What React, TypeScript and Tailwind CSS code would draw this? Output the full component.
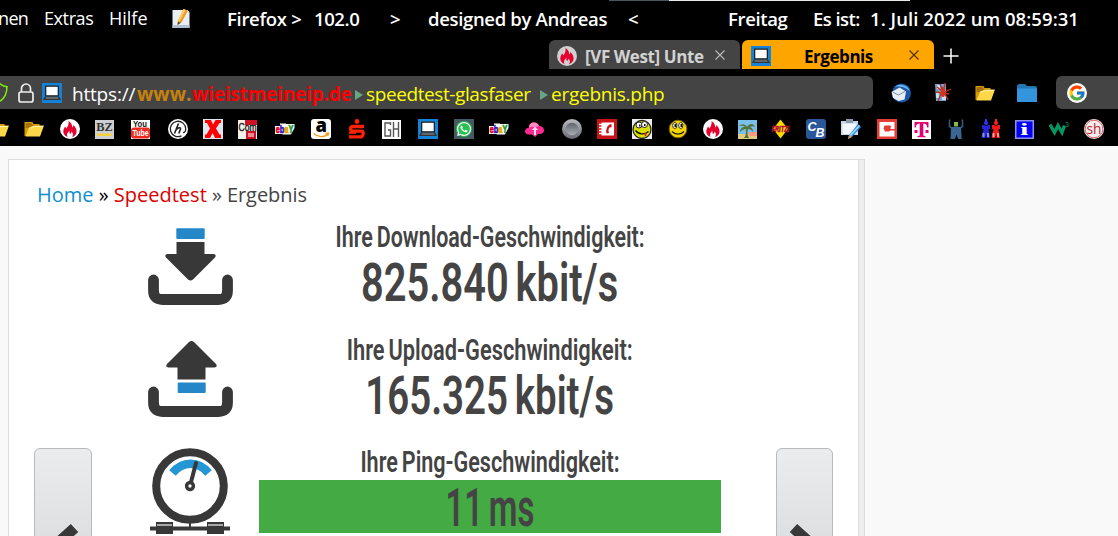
import type { ReactNode } from 'react'
import { FcGoogle } from 'react-icons/fc'
import { FaWhatsapp } from 'react-icons/fa'

function Icon({ children, className = 'h-5 w-5' }: { children: ReactNode; className?: string }) {
  return (
    <svg viewBox="0 0 20 20" className={`block shrink-0 ${className}`} aria-hidden="true">
      {children}
    </svg>
  )
}

function Folder() {
  return (
    <Icon>
      <path d="M.5 3h8l1 2h6v12H.5z" fill="#d49a08" />
      <path d="M1.500 4h6l1 2h6v3h-13z" fill="#a87200" />
      <path d="M5 8.500L10 6.500h10L16 17.500H1.500z" fill="#ffd84a" />
      <path d="M5.500 9.500l5-2h8" stroke="#fff3b0" fill="none" />
    </Icon>
  )
}

function Flame({ bg = '#fff' }: { bg?: string }) {
  return (
    <Icon>
      <circle cx="10" cy="10" r="10" fill={bg} />
      <path
        d="M8.500 2c3 2 4 4.500 3.500 6.500 1-.5 1.300-1.300 1.500-2.500 2 2 3.500 5 3 7.500-.5 2.500-2.500 4-4.500 4.500 1.500-2 1-4-.5-5.500 0 1.500-.8 2-1.500 2.500-.7-1-.7-2-.4-3.200C7 13.500 6.500 16 7.500 18 4.500 17 3 14.500 3.300 12c.2-2 1.200-3 1.700-4.500.8.5 1 1.200 1.200 2C8 7.500 9 5 8.500 2z"
        fill="#e6002e"
      />
    </Icon>
  )
}

function Laptop() {
  return (
    <Icon>
      <path d="M0 0h20v20H0z" fill="#1283d8" />
      <path d="M3 2.500h14v11H3z" fill="#222" />
      <path d="M4.300 3.800h11.400v8.400H4.300z" fill="#fff" />
      <path d="M3 13.500h14l2 3.500H1z" fill="#333" />
      <path d="M4 14.500h12l.5 1h-13z" fill="#999" />
    </Icon>
  )
}

function Ebay() {
  return (
    <Icon>
      <path d="M0 7h5V4.500h6V5h8.500v4L16 15.500H8L7 15H0z" fill="#fff" />
      <text x="0.800" y="13.500" fontFamily="Liberation Sans" fontWeight="700" fontSize="10.500" textLength="17.500" lengthAdjust="spacingAndGlyphs" strokeWidth=".7">
        <tspan fill="#e00012" stroke="#e00012">e</tspan>
        <tspan fill="#2714c8" stroke="#2714c8">b</tspan>
        <tspan fill="#e8a000" stroke="#e8a000">a</tspan>
        <tspan fill="#199b20" stroke="#199b20">Y</tspan>
      </text>
    </Icon>
  )
}

function Notepad() {
  return (
    <Icon>
      <path d="M1.500 1h15l2 2v16h-17z" fill="#e9eef2" />
      <path d="M1.500 16h17v3h-17z" fill="#aebfd0" />
      <path d="M12.500 0l4.500 1.500-6.500 12L6.500 16l.5-4.500z" fill="#f09a22" />
      <path d="M12.500 0l2 .7-6 12-1.500-1z" fill="#ffcf62" />
      <path d="M7 12.500L6.500 16l3-2z" fill="#444" />
    </Icon>
  )
}

const bookmarks: { x: number; icon: ReactNode }[] = [
  { x: -11, icon: <Folder /> },
  { x: 24, icon: <Folder /> },
  { x: 60, icon: <Flame /> },
  {
    x: 95,
    icon: (
      <Icon>
        <path d="M0 1h19v19H0z" fill="#cdcfd2" />
        <text x="1.200" y="12" fontFamily="Liberation Serif" fontWeight="700" fontSize="12.500" textLength="16.500" lengthAdjust="spacingAndGlyphs" fill="#333">BZ</text>
        <path d="M2 14.500h15v2.500H2z" fill="#f6d33c" />
      </Icon>
    ),
  },
  {
    x: 131,
    icon: (
      <Icon>
        <path d="M0 1h19v19H0z" fill="#fff" />
        <rect y="8.500" width="19" height="11" rx="3" fill="#ef2a1e" />
        <g fontFamily="Liberation Sans" fontWeight="700" fontSize="8.500">
          <text x="2" y="7.500" textLength="14" lengthAdjust="spacingAndGlyphs" fill="#111">You</text>
          <text x="1.500" y="17.300" textLength="16" lengthAdjust="spacingAndGlyphs" fill="#fff">Tube</text>
        </g>
      </Icon>
    ),
  },
  {
    x: 168,
    icon: (
      <Icon>
        <circle cx="10" cy="10" r="10" fill="#fff" />
        <path d="M13.500 16.800A7.700 7.700 0 1 1 17.700 10c0 2-1 3.500-2.600 3.500" fill="none" stroke="#222" strokeWidth="1.300" />
        <path d="M10.500 4.500L6.500 14.500M8 11c1.500-2 5-3.500 4.500-1l-1.700 4.500" fill="none" stroke="#222" strokeWidth="1.600" />
      </Icon>
    ),
  },
  {
    x: 203,
    icon: (
      <Icon>
        <path d="M0 0h20v20H0z" fill="#dfe5ee" />
        <path d="M2 1h6l2 4.500L12.500 1H18v3h-1.500L13 9.500l3.500 6H18V19h-6l-2.300-5L7 19H2v-3.500h1.500l3.500-6L4 4H2z" fill="#f00" />
      </Icon>
    ),
  },
  {
    x: 238,
    icon: (
      <Icon>
        <path d="M0 1h19v19H0z" fill="#f4efe9" />
        <path d="M7 1h12v5H7zM8 12h10v8H8z" fill="#cf1027" />
        <path d="M10 14h6v4h-6z" fill="#eb8a94" />
        <text x="0.500" y="11.500" fontFamily="Liberation Sans" fontSize="10.500" textLength="18" lengthAdjust="spacingAndGlyphs" fill="#222" stroke="#222" strokeWidth=".4">Com</text>
      </Icon>
    ),
  },
  { x: 275, icon: <Ebay /> },
  {
    x: 311,
    icon: (
      <Icon>
        <rect width="20" height="20" rx="3" fill="#fff" />
        <text x="4.500" y="13" fontFamily="Open Sans" fontWeight="800" fontSize="19" textLength="11.500" lengthAdjust="spacingAndGlyphs" fill="#000">a</text>
        <path d="M2.500 14.500c4.500 4 11 4 14.500.5M14.500 14.500l3-.5-.7 3" fill="none" stroke="#f79a1c" strokeWidth="1.300" />
      </Icon>
    ),
  },
  {
    x: 347,
    icon: (
      <Icon>
        <circle cx="10" cy="2.500" r="2.400" fill="#f20" />
        <path d="M17 7.500H6Q3.500 7.500 3.500 9.500T6 12.200h8.500q1.700 0 1.700 2.300t-1.700 3.300H2" fill="none" stroke="#f20" strokeWidth="3.300" />
        <path d="M2 12.500h7v2.300H2z" fill="#f20" />
      </Icon>
    ),
  },
  {
    x: 382,
    icon: (
      <Icon>
        <path d="M0 1h19v19H0z" fill="#fff" />
        <path d="M8.500 6V4H3v13h5.500v-6H6M11.500 3v15M16.500 3v15M11.500 10h5" fill="none" stroke="#555" strokeWidth="1.400" />
      </Icon>
    ),
  },
  { x: 418, icon: <Laptop /> },
  {
    x: 454,
    icon: (
      <span className="flex h-5 w-5 items-center justify-center bg-[#465a64]">
        <span className="flex h-4 w-4 items-center justify-center rounded-full bg-[#25c04f]">
          <FaWhatsapp size={16} className="text-white" />
        </span>
      </span>
    ),
  },
  { x: 489, icon: <Ebay /> },
  {
    x: 525,
    icon: (
      <Icon>
        <path d="M4 8.500c0-3 2-5 5-5s4.500 2 5 3.500c3 0 5 2 5 4.500 0 2-2 3.500-4 3.500h-2L10 18l-3-2.500H4c-2 0-4-1-4-3s1.500-3.500 4-4z" fill="#ff2a91" />
        <path d="M4 8.500c0-3 2-5 5-5s4.500 2 5 3.500C10 8.500 8 7 4 8.500z" fill="#ff8bc2" />
        <path d="M10 7.500l3 3.500h-2v5H9v-5H7z" fill="#ffe3f1" />
      </Icon>
    ),
  },
  {
    x: 562,
    icon: (
      <Icon>
        <defs>
          <linearGradient id="disc" x2="0" y2="1">
            <stop stopColor="#b8b9bd" />
            <stop offset="1" stopColor="#6b6c72" />
          </linearGradient>
          <linearGradient id="discInner" x2="0" y2="1">
            <stop stopColor="#5f646b" />
            <stop offset="1" stopColor="#a9adb3" />
          </linearGradient>
        </defs>
        <circle cx="10" cy="10" r="10" fill="url(#disc)" />
        <circle cx="10" cy="10" r="6.200" fill="url(#discInner)" />
      </Icon>
    ),
  },
  {
    x: 597,
    icon: (
      <Icon>
        <path d="M0 0h20v20H0z" fill="#c81418" />
        <path d="M4.500 3.500H17v13H4.500z" fill="#fff" />
        <path d="M2 5.500h4M2 8.500h4M2 11.500h4M2 14.500h4" stroke="#fff" strokeWidth="1.500" />
        <path d="M14.500 5c-4 .5-6 5-5 9.500l2.500-.5-.6-2.800c.2-1.200.7-2.200 1.400-3l1.700.3z" fill="#c81418" />
      </Icon>
    ),
  },
  {
    x: 632,
    icon: (
      <Icon>
        <path d="M0 0h20v20H0z" fill="#eee" />
        <circle cx="10" cy="10.500" r="9" fill="#dce000" stroke="#222" strokeWidth="1.300" />
        <circle cx="7" cy="6" r="3" fill="#fff" stroke="#222" />
        <circle cx="12.500" cy="5.500" r="3" fill="#fff" stroke="#222" />
        <path d="M7 5.500h1.500v2H7zM12 5h1.500v2H12z" fill="#111" />
        <path d="M3.500 11.500c3 4 9 4.500 13 1" stroke="#111" strokeWidth="1.300" fill="none" />
        <path d="M12 14.500l2.500-1v3l-1.500 1z" fill="#ec1c24" />
      </Icon>
    ),
  },
  {
    x: 668,
    icon: (
      <Icon>
        <circle cx="10" cy="10" r="8.800" fill="#f5d400" stroke="#7c6800" />
        <ellipse cx="6.800" cy="6.500" rx="2.100" ry="3" fill="#fff" stroke="#333" />
        <ellipse cx="12.800" cy="6.500" rx="2.100" ry="3" fill="#fff" stroke="#333" />
        <path d="M6.500 5h1.700v3H6.500zM12.500 5h1.700v3h-1.700z" fill="#111" />
        <path d="M4 12.500c3 3.500 9 3.500 12 0" fill="none" stroke="#222" strokeWidth="1.200" />
      </Icon>
    ),
  },
  { x: 703, icon: <Flame /> },
  {
    x: 738,
    icon: (
      <Icon>
        <path d="M0 1h19v19H0z" fill="#78bfe9" />
        <path d="M0 15h19v5H0z" fill="#dfcc80" />
        <path d="M11 13h8v4h-8z" fill="#ff987e" />
        <path d="M9 8c-2-4-6-3-8-1 3-.5 5 0 6 1-3 0-5 2-5 5 2-2 4-3 6-3 0 4 0 7-2 9h5c-2-3-2-6-1-9 2 0 4 1 5 3 0-3-1-4-3-5 2-1 4-1 5 0-1-4-6-4-8 0z" fill="#56733a" />
      </Icon>
    ),
  },
  {
    x: 771,
    icon: (
      <Icon>
        <path d="M9.500.5l7.500 9.500-7.500 9.500L2 10z" fill="#fcd900" />
        <text x="0.500" y="13" fontFamily="Liberation Sans" fontWeight="700" fontStyle="italic" fontSize="9" textLength="18" lengthAdjust="spacingAndGlyphs" fill="#c00a3e" stroke="#a8103a" strokeWidth=".6">FRITZ!</text>
      </Icon>
    ),
  },
  {
    x: 806,
    icon: (
      <Icon>
        <rect width="20" height="20" rx="3" fill="#29579a" />
        <g fontFamily="Liberation Sans" fontWeight="700" fontStyle="italic" fill="#fff">
          <text x="1.500" y="11.500" fontSize="12.500">C</text>
          <text x="9.500" y="18" fontSize="12.500">B</text>
        </g>
      </Icon>
    ),
  },
  {
    x: 841,
    icon: (
      <Icon>
        <path d="M0 2h17v14H0z" fill="#bed6ec" />
        <path d="M1.500 4.500h14V15h-14z" fill="#f4f8fc" />
        <path d="M5 0h7v4H5z" fill="#8a99a8" />
        <path d="M17 5l3 3-9 10-4 2 1-4z" fill="#2489e0" />
        <path d="M18 6l1 1-9 10-1.500-1z" fill="#a8dcff" />
        <path d="M8 16l3 2-4 2z" fill="#df8f4d" />
      </Icon>
    ),
  },
  {
    x: 877,
    icon: (
      <Icon>
        <path d="M0 0h20v20H0z" fill="#e63b35" />
        <path d="M2.500 3h15v7h-4V8.500l1-1-1.500-1H7.500l-1 3 1.500 3h4l1.500-1h4v6h-15z" fill="#fff" />
      </Icon>
    ),
  },
  {
    x: 912,
    icon: (
      <Icon>
        <path d="M0 1h19v19H0z" fill="#fff" />
        <path d="M2.500 3h14v5.500h-1.300C15 6 14 4.500 11.300 4.500v11.200c0 1 .7 1.300 2.200 1.300v1.300h-8V17c1.500 0 2.200-.3 2.200-1.300V4.500C5 4.500 4 6 3.800 8.500H2.500zM2.500 11h3v3h-3zM13.500 11h3v3h-3z" fill="#e20074" />
      </Icon>
    ),
  },
  {
    x: 946,
    icon: (
      <Icon>
        <path d="M3.500.5v7l2 1.500h9l2-1.500v-7" fill="none" stroke="#315a83" strokeWidth="1.600" />
        <path d="M8 3h4v4.500H8z" fill="#7cbd4c" />
        <path d="M5 8h10l.7 12H12l-1.500-4.500L9 20H4.500z" fill="#3b6693" />
      </Icon>
    ),
  },
  {
    x: 981,
    icon: (
      <Icon>
        <path d="M4 0h2v3H4z" fill="#33f" />
        <circle cx="5" cy="4" r="2" fill="#33f" />
        <path d="M1 6h2l2 1 2-1h2v4H7.500L9 19H5.500v-4L4 19H.5l2-9H1z" fill="#2424d8" />
        <path d="M14 0h2v3h-2z" fill="#f22" />
        <circle cx="15" cy="4" r="2" fill="#f22" />
        <path d="M11 6h2l2 1 2-1h2v4h-1.500l1.500 9h-3.500v-4L14 19h-3.500l2-9H11z" fill="#f01818" />
        <path d="M1.500 14h2v4h-2zM6 14h2v4H6z" fill="#9090ee" />
        <path d="M11.500 14h2v4h-2zM16 14h2v4h-2z" fill="#f59c9c" />
      </Icon>
    ),
  },
  {
    x: 1015,
    icon: (
      <Icon>
        <path d="M.75 1.750h17.500v17.500H.75z" fill="#0000ee" stroke="#8f8ff4" strokeWidth="1.500" />
        <text x="5" y="16" fontFamily="Liberation Serif" fontWeight="700" fontSize="17" textLength="8.500" lengthAdjust="spacingAndGlyphs" fill="#fff">i</text>
      </Icon>
    ),
  },
  {
    x: 1049,
    icon: (
      <Icon>
        <path d="M1 5.500l4.500 8L9 6.500l4 7 2.500-7" fill="none" stroke="#079562" strokeWidth="3.400" />
        <text x="16" y="8" fontFamily="Liberation Sans" fontSize="7" fill="#079562">3</text>
      </Icon>
    ),
  },
  {
    x: 1084,
    icon: (
      <Icon>
        <circle cx="10" cy="10" r="10" fill="#f6eeee" />
        <circle cx="10" cy="10" r="8.800" fill="none" stroke="#d5686c" />
        <text x="2.500" y="14.500" fontFamily="Open Sans" fontSize="14.500" textLength="15" lengthAdjust="spacingAndGlyphs" fill="#bf1e2e">sh</text>
      </Icon>
    ),
  },
]

function MenuBar() {
  return (
    <div className="h-10">
      <div className="flex h-px pl-[609px]">
        <div className="w-[60px] bg-[#4a545b]" />
        <div className="w-[241px] bg-[#e6ecec]" />
      </div>
      <div className="flex h-[35px] items-center whitespace-pre text-[18px] text-white">
        <span className="-ml-0.5 w-[46px] shrink-0 tracking-[-0.65px]">nen</span>
        <span className="w-[65px] shrink-0 tracking-[-0.4px]">Extras</span>
        <span className="w-[62px] shrink-0 tracking-[0px]">Hilfe</span>
        <Notepad />
        <div className="flex pl-9 text-[18.5px] font-semibold">
          <span className="w-[87px] tracking-[-0.3px]">Firefox &gt;</span>
          <span className="w-[76px] tracking-[-0.4px]">102.0</span>
          <span className="w-[38px]">&gt;</span>
          <span className="w-[200px] tracking-[-0.33px]">designed by Andreas</span>
          <span className="w-[100px]">&lt;</span>
          <span className="w-[85px] tracking-[-0.35px]">Freitag</span>
          <span className="w-[57px] tracking-[-0.55px]">Es ist:</span>
          <span className="tracking-[0.05px]">1. Juli 2022 um 08:59:31</span>
        </div>
      </div>
    </div>
  )
}

function CloseX({ color }: { color: string }) {
  return (
    <svg viewBox="0 0 10 10" className="h-2.5 w-2.5 shrink-0">
      <path d="M.5.5l9 9M9.500.5l-9 9" stroke={color} strokeWidth="1.100" />
    </svg>
  )
}

function Tabs() {
  return (
    <div className="flex h-9 gap-0.5 pl-[549px] text-[17px] font-bold">
      <div className="flex h-[29px] w-[191px] items-center rounded-t-md bg-[#444] pl-2 text-[#d2d2d2]">
        <div className="mt-0.5"><Flame bg="#d0d0d0" /></div>
        <span className="mt-1 w-[138px] shrink-0 whitespace-nowrap pl-2 tracking-[-0.4px]">[VF West] Unte</span>
        <CloseX color="#bbb" />
      </div>
      <div className="flex h-[29px] w-[192px] items-center rounded-t-md bg-[#ffa500] pl-[9px] text-black">
        <div className="mt-0.5"><Laptop /></div>
        <span className="mt-1 w-[138px] shrink-0 pl-[33px] tracking-[-0.45px]">Ergebnis</span>
        <CloseX color="#4b3000" />
      </div>
      <svg viewBox="0 0 16 16" className="ml-[7px] mt-2 h-4 w-4">
        <path d="M8 .5v15M.5 8h15" stroke="#fff" strokeWidth="1.500" />
      </svg>
    </div>
  )
}

function UrlArrow() {
  return (
    <svg viewBox="0 0 8 10" className="h-2.5 w-2 shrink-0">
      <path d="M0 0l8 5-8 5z" fill="#69a583" />
    </svg>
  )
}

function AddressRow() {
  return (
    <div className="flex h-[33px] items-center">
      <div className="flex h-[33px] w-[873px] items-center rounded-r-md bg-[#444]">
        <svg viewBox="0 0 62 20" className="h-5 w-[62px] shrink-0 fill-none">
          <path d="M-4 2.500L0 .8c2 1.500 4 2.700 7 3 0 7-2 11-7 14.500" stroke="#80f000" strokeWidth="1.500" />
          <path d="M21.500 9V5.500a4.500 4.500 0 0 1 9 0V9" stroke="#eee" strokeWidth="1.700" />
          <rect x="19" y="9" width="14" height="10" rx="2" stroke="#eee" strokeWidth="1.700" />
        </svg>
        <div className="-ml-5"><Laptop /></div>
        <div className="flex items-center whitespace-nowrap pl-[10px] pt-1 text-[19px]">
          <span className="w-[65px] tracking-[-0.2px] text-white">https://</span>
          <span className="w-[55px] font-bold tracking-[0.1px] text-[#c8820a]">www.</span>
          <span className="w-[163px] font-bold tracking-[-0.2px] text-[#f00]">wieistmeineip.de</span>
          <UrlArrow />
          <span className="w-[177px] pl-[3px] tracking-[-0.4px] text-[#ff0]">speedtest-glasfaser</span>
          <UrlArrow />
          <span className="pl-[3px] tracking-[-0.25px] text-[#ff0]">ergebnis.php</span>
        </div>
      </div>
      <div className="flex w-[183px] shrink-0 gap-[22px] pl-[18px]">
        <Icon>
          <circle cx="10.500" cy="10" r="9.500" fill="#1c57a5" />
          <path d="M4 3.500C9 0 17 2 18.500 8 15 4 9 3 4 3.500z" fill="#69b5ef" />
          <path d="M0.500 9l8-4.500 6.500 4-1.500 8-6 1.500L2 15z" fill="#e9eef5" />
          <path d="M1.500 9l6 3 6.500-3.500" fill="none" stroke="#7c8da5" />
        </Icon>
        <Icon>
          <path d="M2 1h11v17H3z" fill="#6fa1d0" />
          <path d="M4 2h3v4H4zM9 12h4v5H9zM3 10h3v5H3z" fill="#c8def2" />
          <path d="M7 1l2 5M12 0l-1 6M4 4l5 4M18 6l-6 3M5 18l3-7M15 17l-3-6M3 9l6 1M16 11l-5-1" stroke="#c52b14" strokeWidth="1.300" />
          <ellipse cx="10" cy="9" rx="2.200" ry="5" fill="#d8301a" />
        </Icon>
        <Folder />
        <Icon>
          <path d="M1 2q0-1 1-1h6l2 2h8q2 0 2 2v14H0V2z" fill="#2176b3" />
          <path d="M0 5.500h20V19H0z" fill="#3595dc" />
        </Icon>
      </div>
      <div className="flex h-[33px] flex-1 items-center rounded-l-md bg-[#444] pl-[11px]">
        <div className="flex h-5 w-5 items-center justify-center rounded-full bg-white">
          <FcGoogle size={18} />
        </div>
      </div>
    </div>
  )
}

function BookmarkBar() {
  return (
    <div className="flex h-[37px] overflow-hidden pt-[10px]">
      {bookmarks.map((b, i) => (
        <div
          key={b.x}
          className="w-5 shrink-0"
          style={{ marginLeft: i === 0 ? b.x : b.x - bookmarks[i - 1].x - 20 }}
        >
          {b.icon}
        </div>
      ))}
    </div>
  )
}

function Tray() {
  return <path d="M5.500 52v10.500q0 9 9 9h56q9 0 9-9V52" fill="none" stroke="#383838" strokeWidth="10.800" strokeLinecap="round" />
}

function DownloadIcon() {
  return (
    <svg viewBox="0 0 86 78" className="h-[78px] w-[86px]">
      <rect x="28.300" y="0.200" width="28.400" height="10.700" rx="1" fill="#2488c8" />
      <path d="M28.500 14h28v12h9q3.500.5 1.500 3.500L45 51.500q-2.500 2-5 0L18 29.500q-2-3 1.500-3.500h9z" fill="#383838" />
      <Tray />
    </svg>
  )
}

function UploadIcon() {
  return (
    <svg viewBox="0 0 86 78" className="h-[78px] w-[86px]">
      <path d="M29.500 39.500h28v-12h9q3.500-.5 1.500-3.500L46 2q-2.500-2-5 0L19 24q-2 3 1.500 3.500h9z" fill="#383838" />
      <rect x="29.700" y="42.500" width="28" height="10.500" rx="1" fill="#2488c8" />
      <Tray />
    </svg>
  )
}

function GaugeIcon() {
  return (
    <svg viewBox="0 0 86 88" className="h-[88px] w-[86px]">
      <circle cx="42" cy="38" r="33.800" fill="none" stroke="#383838" strokeWidth="8" />
      <path d="M24.500 25Q32 15.800 42.500 15.800T60.500 25" fill="none" stroke="#2496d3" strokeWidth="8.500" />
      <path d="M42 38L48 15" stroke="#383838" strokeWidth="4" strokeLinecap="round" />
      <circle cx="42" cy="38" r="3.400" fill="#fff" stroke="#383838" strokeWidth="3.500" />
      <path d="M42 75v5" stroke="#383838" strokeWidth="2" />
      <path d="M2 80.500h80" stroke="#383838" strokeWidth="4" />
      <path d="M8 74h17v12H8zM59 74h17v12H59z" fill="#383838" />
      <path d="M9 77h15M60 77h15" stroke="#ccc" strokeWidth="1.500" />
    </svg>
  )
}

function Result({ label, value, good }: { label: ReactNode; value: ReactNode; good?: boolean }) {
  return (
    <div className="flex h-[112.67px] flex-col items-center whitespace-nowrap font-['Roboto'] text-[#444]">
      <div className="flex h-[33px] items-center pb-[3px] text-[30px] font-semibold leading-[30px] [word-spacing:-2px]">{label}</div>
      <div className={`flex h-[53px] w-full items-center justify-center pt-[3px] text-[54px] font-semibold leading-[50px] [word-spacing:-4px] ${good ? 'bg-[#44aa44]' : ''}`}>
        {value}
      </div>
    </div>
  )
}

function NavButton({ dir }: { dir: 'left' | 'right' }) {
  return (
    <button
      aria-label={dir === 'left' ? 'Zurück' : 'Weiter'}
      className="h-[150px] w-full rounded-md border border-[#b9babc] bg-linear-to-b from-[#ebecee] to-[#d6d7d9]"
    >
      <svg viewBox="0 0 56 148" className={`h-[148px] w-[56px] ${dir === 'right' ? '-scale-x-100' : ''}`}>
        <path d="M39.500 79L19 97.500 39.500 116" fill="none" stroke="#383838" strokeWidth="11" />
      </svg>
    </button>
  )
}

export default function App() {
  return (
    <div className="h-[536px] w-[1118px] overflow-hidden bg-[#f9f9f9] font-['Open_Sans',sans-serif]">
      <header className="h-[146px] bg-black">
        <MenuBar />
        <Tabs />
        <AddressRow />
        <BookmarkBar />
      </header>
      <div className="flex pl-2 pt-[13px]">
        <main className="h-[400px] w-[850px] border-l border-t border-[#ddd] bg-white">
          <nav className="flex h-[61px] items-end whitespace-pre pb-[11px] pl-7 text-[20px] text-[#444]">
            <a className="text-[#0d8fd0]">Home</a>
            <span className="text-black"> » </span>
            <a className="text-[#dc0000]">Speedtest</a>
            <span className="tracking-[-0.05px]"> » Ergebnis</span>
          </nav>
          <div className="flex">
            <div className="ml-[25px] mt-[227px] w-[58px]">
              <NavButton dir="left" />
            </div>
            <div className="ml-14 w-[111px] pt-[7px]">
              <DownloadIcon />
              <div className="mt-[34px]"><UploadIcon /></div>
              <div className="mt-[30px]"><GaugeIcon /></div>
            </div>
            <section className="w-[462px] pt-px">
              <Result
                label={<span className="scale-x-[0.715]">Ihre Download-Geschwindigkeit:</span>}
                value={<span className="scale-x-[0.736]">825.840 kbit/s</span>}
              />
              <Result
                label={<span className="scale-x-[0.727]">Ihre Upload-Geschwindigkeit:</span>}
                value={<span className="scale-x-[0.712]">165.325 kbit/s</span>}
              />
              <Result
                label={<span className="scale-x-[0.72]">Ihre Ping-Geschwindigkeit:</span>}
                value={<span className="scale-x-[0.61]">11 ms</span>}
                good
              />
            </section>
            <div className="ml-[55px] mt-[227px] w-[57px]">
              <NavButton dir="right" />
            </div>
          </div>
        </main>
        <div className="w-[7px] border-x border-t border-[#ddd] bg-[#efefef]" />
      </div>
    </div>
  )
}
